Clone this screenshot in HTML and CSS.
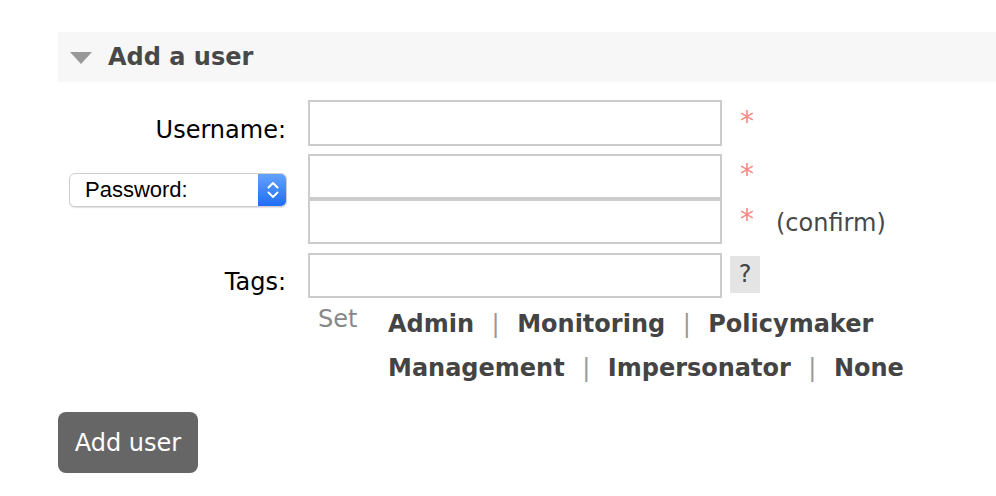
FILE: index.html
```html
<!DOCTYPE html>
<html>
<head>
<meta charset="utf-8">
<link rel="stylesheet" href="styles.css">
</head>
<body>
<div class="section">
  <h2 class="section-title"><span class="tri"></span>Add a user</h2>
  <div class="form">
    <div class="row row-user">
      <div class="label">Username:</div>
      <div class="input"></div>
      <div class="extra"><span class="req">*</span></div>
    </div>

    <div class="row row-pass">
      <div class="label label-select">
        <div class="select">
          <span class="select-text">Password:</span>
          <span class="stepper">
            <svg width="14" height="22" viewBox="0 0 14 22"><path d="M2.5 8.5 L7 4 L11.5 8.5 M2.5 13.5 L7 18 L11.5 13.5" fill="none" stroke="#fff" stroke-width="2" stroke-linecap="round" stroke-linejoin="round"/></svg>
          </span>
        </div>
      </div>
      <div class="pass-fields">
        <div class="pass-line">
          <div class="input"></div>
          <div class="extra"><span class="req">*</span></div>
        </div>
        <div class="pass-line">
          <div class="input"></div>
          <div class="extra"><span class="req">*</span><span class="note">(confirm)</span></div>
        </div>
      </div>
    </div>

    <div class="row row-tags">
      <div class="label">Tags:</div>
      <div class="input"></div>
      <div class="extra"><span class="help">?</span></div>
    </div>

    <div class="tagset">
      <span class="set">Set</span>
      <div class="taglinks">
        <div class="tagline"><b>Admin</b><i>|</i><b>Monitoring</b><i>|</i><b>Policymaker</b></div>
        <div class="tagline"><b>Management</b><i>|</i><b>Impersonator</b><i>|</i><b>None</b></div>
      </div>
    </div>
  </div>
  <button class="btn">Add user</button>
</div>
</body>
</html>
```

FILE: styles.css
```css
html, body {
  margin: 0;
  padding: 0;
  background: #fff;
}
body {
  font-family: "DejaVu Sans", Verdana, sans-serif;
  font-size: 24px;
  color: #484848;
  padding: 32px 0 0 58px;
  overflow: hidden;
}
.section-title {
  margin: 0;
  height: 50px;
  display: flex;
  align-items: center;
  background: #f7f7f7;
  font-size: 24px;
  font-weight: bold;
  color: #484848;
  padding-left: 12px;
}
.tri {
  width: 0;
  height: 0;
  border-left: 11px solid transparent;
  border-right: 11px solid transparent;
  border-top: 12px solid #999;
  margin-right: 16px;
  margin-top: 2px;
}
.form {
  margin-top: 18px;
  display: flex;
  flex-direction: column;
}
.row {
  display: flex;
}
.row-pass { margin-top: 8px; }
.row-tags { margin-top: 9px; }
.label {
  box-sizing: border-box;
  width: 250px;
  flex: none;
  display: flex;
  align-items: center;
  justify-content: flex-end;
  padding: 13px 22px 0 0;
  color: #000;
}
.label-select {
  justify-content: flex-start;
  align-items: flex-start;
  padding: 19px 0 0 11px;
}
.input {
  box-sizing: border-box;
  width: 414px;
  height: 45px;
  flex: none;
  border: 2px solid #ccc;
  background: #fff;
}
.row-user .input { height: 46px; }
.pass-line {
  display: flex;
}
.extra {
  display: flex;
  align-items: center;
}
.req {
  color: #f38b85;
  margin-left: 18px;
  margin-top: -3px;
  font-size: 28px;
  line-height: 28px;
}
.note {
  margin-left: 22px;
  margin-top: 3px;
  color: #484848;
}
.help {
  margin-left: 8px;
  margin-top: -3px;
  width: 30px;
  height: 37px;
  background: #e4e4e4;
  display: flex;
  align-items: center;
  justify-content: center;
  font-size: 24px;
  color: #444;
}
.select {
  box-sizing: border-box;
  width: 218px;
  height: 34px;
  border-radius: 6px;
  border: 1px solid #cfcfcf;
  box-shadow: 0 1px 1px rgba(0,0,0,0.12);
  background: #fff;
  display: flex;
  align-items: center;
  justify-content: space-between;
  font-family: "Liberation Sans", Arial, sans-serif;
  font-size: 22px;
  color: #000;
  overflow: hidden;
}
.select-text { padding-left: 15px; }
.stepper {
  width: 29px;
  height: 34px;
  margin-right: -1px;
  background: linear-gradient(#66a3fa, #1c6cf4);
  border-radius: 0 6px 6px 0;
  display: flex;
  align-items: center;
  justify-content: center;
}
.tagset {
  display: flex;
  padding-left: 260px;
  margin-top: 4px;
}
.set {
  color: #888;
  width: 70px;
  line-height: 44px;
  margin-top: -5px;
}
.tagline {
  line-height: 44px;
  white-space: nowrap;
  color: #444;
}
.tagline b { font-weight: bold; }
.tagline i {
  font-style: normal;
  color: #999;
  margin: 0 17.5px;
}
.btn {
  display: block;
  margin-top: 22px;
  width: 140px;
  height: 61px;
  border: 0;
  border-radius: 8px;
  background: #666;
  color: #fff;
  font-family: "DejaVu Sans", Verdana, sans-serif;
  font-size: 24px;
  padding: 0;
}
```
